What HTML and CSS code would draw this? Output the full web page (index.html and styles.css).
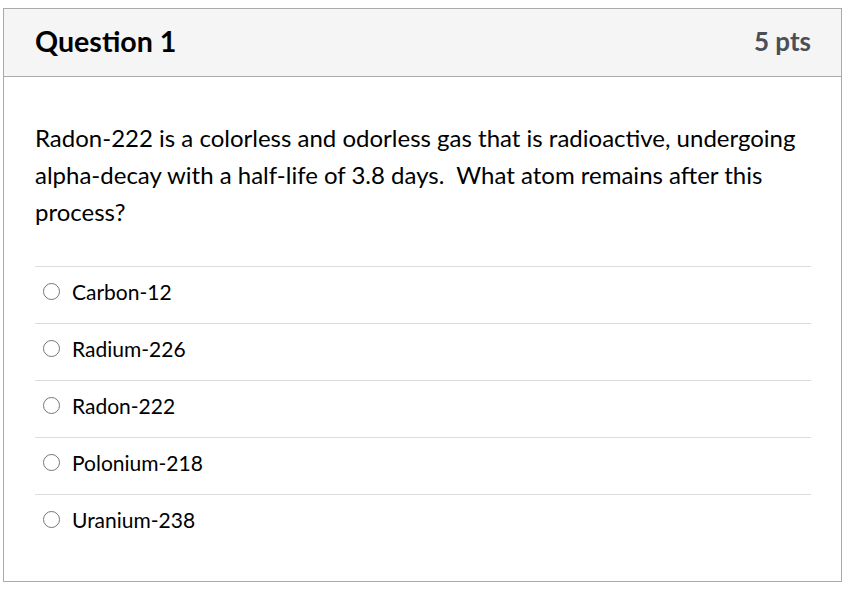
FILE: index.html
```html
<!DOCTYPE html>
<html>
<head>
<meta charset="utf-8">
<link rel="stylesheet" href="styles.css">
</head>
<body>
<div class="question">
  <div class="q-header">
    <h2 class="q-title">Question 1</h2>
    <span class="q-pts">5 pts</span>
  </div>
  <div class="q-body">
    <p class="q-text">Radon-222 is a colorless and odorless gas that is radioactive, undergoing alpha-decay with a half-life of 3.8 days.&nbsp; What atom remains after this process?</p>
    <div class="answers">
      <label class="answer"><span class="radio"></span><span class="answer-text">Carbon-12</span></label>
      <label class="answer"><span class="radio"></span><span class="answer-text">Radium-226</span></label>
      <label class="answer"><span class="radio"></span><span class="answer-text">Radon-222</span></label>
      <label class="answer"><span class="radio"></span><span class="answer-text">Polonium-218</span></label>
      <label class="answer"><span class="radio"></span><span class="answer-text">Uranium-238</span></label>
    </div>
  </div>
</div>
</body>
</html>
```
FILE: styles.css
```css
html, body {
  margin: 0;
  padding: 0;
  background: #ffffff;
}
body {
  padding: 8px 0 0 3px;
  font-family: Lato, "Noto Sans", sans-serif;
  color: #000;
}
.question {
  width: 837px;
  height: 572px;
  border: 1px solid #aaaaaa;
}
.q-header {
  height: 68px;
  background: #f5f5f5;
  border-bottom: 1px solid #aaaaaa;
  display: flex;
  align-items: center;
  justify-content: space-between;
  padding: 0 30px 4px 31px;
  box-sizing: border-box;
}
.q-title {
  margin: 0;
  font-size: 28.6px;
  font-weight: 700;
  color: #000;
}
.q-pts {
  font-size: 26px;
  font-weight: 700;
  color: #4a4f55;
}
.q-body {
  padding: 42px 30px 0 31px;
}
.q-text {
  margin: 0 0 36px 0;
  font-size: 24px;
  line-height: 37px;
}
.answer {
  display: flex;
  align-items: center;
  border-top: 1px solid #dcdcdc;
  font-size: 21px;
  padding-bottom: 7px;
  height: 49px;
}
.radio {
  width: 15px;
  height: 15px;
  border: 1.5px solid #767676;
  border-radius: 50%;
  margin: 0 12px 0 8px;
  flex: none;
}
.answer-text {
  color: #000;
}
```
